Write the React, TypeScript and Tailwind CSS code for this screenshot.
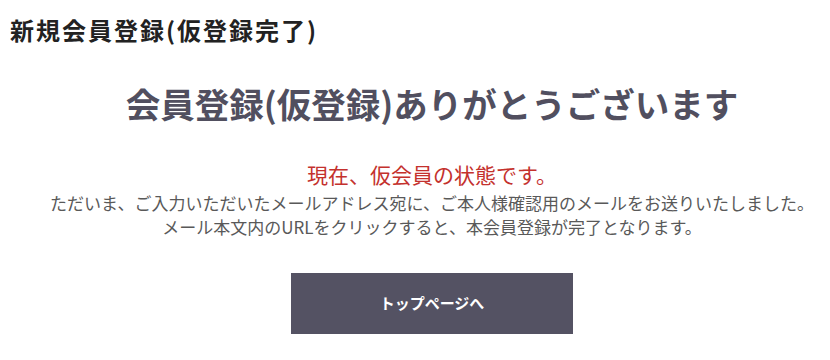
export default function App() {
  return (
    <div className="w-[830px] h-[360px] bg-white overflow-hidden [font-family:'Noto_Sans_CJK_JP',sans-serif]">
      <h1 className="pl-[10px] pt-[14px] text-[24px] font-bold leading-[32px] tracking-[2px] text-[#222]">
        新規会員登録(仮登録完了)
      </h1>

      <div className="flex flex-col items-center pl-[34px]">
        <h2 className="mt-[34px] text-[34.5px] font-bold leading-[46px] text-[#514f5f]">
          会員登録(仮登録)ありがとうございます
        </h2>

        <p className="mt-[34px] text-[21px] leading-[28px] text-[#c4312d]">
          現在、仮会員の状態です。
        </p>
        <p className="mt-[3px] text-center text-[17px] leading-[24px] text-[#595959]">
          ただいま、ご入力いただいたメールアドレス宛に、ご本人様確認用のメールをお送りいたしました。
          <br />
          メール本文内のURLをクリックすると、本会員登録が完了となります。
        </p>

        <button className="mt-[34px] w-[282px] h-[61px] bg-[#545263] text-white text-[15px] font-bold">
          トップページへ
        </button>
      </div>
    </div>
  );
}
